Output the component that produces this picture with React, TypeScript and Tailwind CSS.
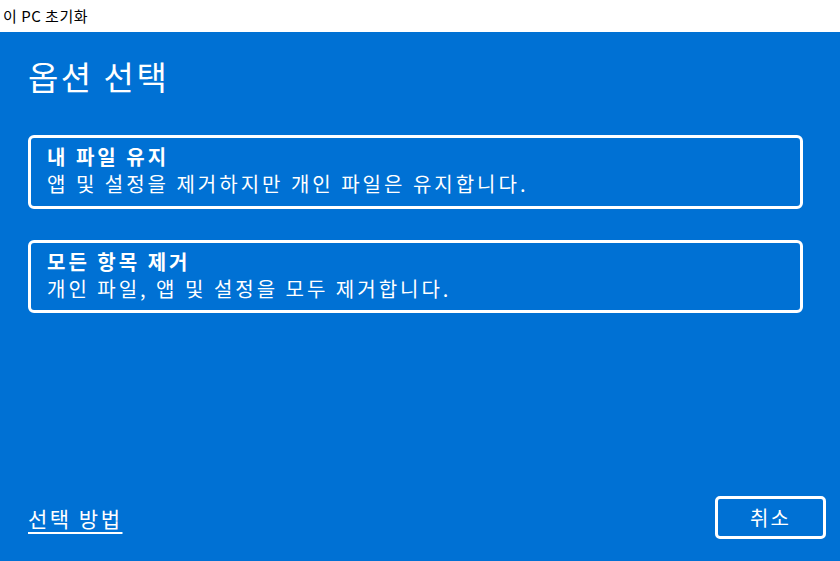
export default function App() {
  const font = { fontFamily: '"Noto Sans CJK KR", "Noto Sans", sans-serif' };
  return (
    <div className="flex h-[561px] w-[840px] flex-col" style={font}>
      <div className="flex h-[32px] items-center bg-white pl-[3px] text-[15px] tracking-[0.5px] text-black">이 PC 초기화</div>
      <div className="flex flex-1 flex-col bg-[#0071d4] px-[28px] text-white">
        <h1 className="mt-[22px] text-[33px] leading-[44px] font-normal tracking-[2.5px]">옵션 선택</h1>
        <div className="mt-[37px] flex flex-col gap-[31px] pr-[9px]">
          <button className="flex h-[74px] flex-col items-start rounded-[6px] border-[3px] border-white px-[16px] pt-[5px] text-left">
            <span className="text-[20px] leading-[28px] font-bold tracking-[3px]">내 파일 유지</span>
            <span className="text-[20px] leading-[26px] tracking-[3px]">앱 및 설정을 제거하지만 개인 파일은 유지합니다.</span>
          </button>
          <button className="flex h-[73px] flex-col items-start rounded-[6px] border-[3px] border-white px-[16px] pt-[5px] text-left">
            <span className="text-[20px] leading-[28px] font-bold tracking-[3px]">모든 항목 제거</span>
            <span className="text-[20px] leading-[26px] tracking-[3px]">개인 파일, 앱 및 설정을 모두 제거합니다.</span>
          </button>
        </div>
        <div className="mt-auto mb-[22px] flex items-center justify-between">
          <a className="text-[21px] leading-[28px] tracking-[2.5px] underline underline-offset-[5px]">선택 방법</a>
          <button className="-mr-[14px] flex h-[43px] w-[111px] items-center justify-center rounded-[5px] border-[3px] border-white text-[20px] tracking-[2px]">
            취소
          </button>
        </div>
      </div>
    </div>
  );
}
